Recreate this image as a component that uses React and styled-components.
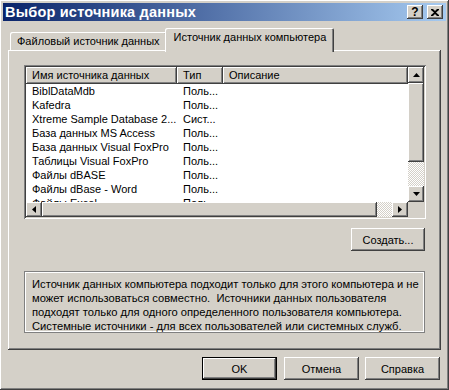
import styled, { createGlobalStyle } from "styled-components";

const FACE = "#D4D0C8";
const RAISED = `box-shadow: inset -1px -1px #404040, inset 1px 1px #ffffff, inset -2px -2px #808080, inset 2px 2px ${FACE};`;
const SUNKEN = `box-shadow: inset 1px 1px #808080, inset -1px -1px #ffffff, inset 2px 2px #404040, inset -2px -2px ${FACE};`;
const HATCH = `background: repeating-conic-gradient(#ffffff 0 25%, ${FACE} 0 50%) 0 0 / 2px 2px;`;

const GlobalStyle = createGlobalStyle`
  html, body {
    margin: 0;
    padding: 0;
    background: ${FACE};
    overflow: hidden;
  }
  * {
    box-sizing: border-box;
  }
`;

const Window = styled.div`
  width: 449px;
  height: 390px;
  padding: 3px;
  display: flex;
  flex-direction: column;
  background: ${FACE};
  font-family: "Liberation Sans", Arial, sans-serif;
  font-size: 11px;
  color: #000;
  ${RAISED}
`;

const TitleBar = styled.div`
  height: 18px;
  display: flex;
  align-items: center;
  padding: 0 3px 0 2px;
  background: linear-gradient(to right, #0a246a, #a6caf0);
`;

const Title = styled.div`
  flex: 1;
  color: #fff;
  font-weight: bold;
  font-size: 14.5px;
  letter-spacing: 0.2px;
`;

const CaptionButton = styled.div`
  width: 16px;
  height: 14px;
  margin-left: ${(p) => p.gap || 0}px;
  display: flex;
  align-items: center;
  justify-content: center;
  background: ${FACE};
  font-weight: bold;
  font-size: 12px;
  ${RAISED}
`;

const Body = styled.div`
  flex: 1;
  display: flex;
  flex-direction: column;
  padding: 7px 5px 0 5px;
`;

const TabStrip = styled.div`
  height: 22px;
  display: flex;
  align-items: flex-end;
  padding-left: 2px;
  position: relative;
  z-index: 1;
`;

const Tab = styled.div`
  height: ${(p) => (p.active ? 24 : 18)}px;
  margin: ${(p) => (p.active ? "0 0 -2px -2px" : "0")};
  padding: ${(p) => (p.active ? "3px 8px 0 9px" : "3px 7px 0 7px")};
  background: ${FACE};
  white-space: nowrap;
  border-radius: 2px 2px 0 0;
  box-shadow: inset 1px 1px #ffffff, inset -1px 0 #404040, inset -2px 0 #808080;
`;

const Panel = styled.div`
  height: 300px;
  width: 433px;
  display: flex;
  flex-direction: column;
  padding: 15px 15px 0 16px;
  ${RAISED}
`;

const ListView = styled.div`
  width: 402px;
  height: 154px;
  padding: 2px;
  display: grid;
  grid-template-columns: 1fr 16px;
  grid-template-rows: 1fr 15px;
  background: #fff;
  ${SUNKEN}
`;

const ListArea = styled.div`
  overflow: hidden;
  display: flex;
  flex-direction: column;
`;

const Header = styled.div`
  display: flex;
  height: 17px;
  flex-shrink: 0;
`;

const HeaderCell = styled.div`
  width: ${(p) => p.w}px;
  flex: ${(p) => (p.w ? "none" : 1)};
  padding: 2px 0 0 6px;
  background: ${FACE};
  white-space: nowrap;
  box-shadow: inset -1px -1px #404040, inset 1px 1px #ffffff, inset -2px -2px #808080;
`;

const Row = styled.div`
  display: flex;
  height: 14px;
  line-height: 14px;
  flex-shrink: 0;
  white-space: nowrap;
`;

const Cell = styled.div`
  width: ${(p) => p.w}px;
  padding-left: 6px;
  overflow: hidden;
`;

const VScroll = styled.div`
  display: flex;
  flex-direction: column;
  ${HATCH}
`;

const HScroll = styled.div`
  display: flex;
  ${HATCH}
`;

const ArrowBtn = styled.div`
  width: ${(p) => p.w || 16}px;
  height: ${(p) => p.h || 16}px;
  flex-shrink: 0;
  display: flex;
  align-items: center;
  justify-content: center;
  background: ${FACE};
  ${RAISED}
`;

const Thumb = styled.div`
  flex: ${(p) => p.size};
  background: ${FACE};
  ${RAISED}
`;

const Track = styled.div`
  flex: ${(p) => p.size};
`;

const Corner = styled.div`
  background: ${FACE};
`;

const ActionRow = styled.div`
  display: flex;
  justify-content: flex-end;
  padding-right: 1px;
  margin-top: 9px;
`;

const Button = styled.button`
  width: ${(p) => p.w || 75}px;
  height: 23px;
  margin-left: ${(p) => p.gap || 0}px;
  padding: 0;
  border: 0;
  background: ${FACE};
  font: inherit;
  color: #000;
  ${(p) =>
    p.primary
      ? `box-shadow: inset 0 0 0 1px #000, inset -2px -2px #404040, inset 2px 2px #ffffff, inset -3px -3px #808080, inset 3px 3px ${FACE};`
      : RAISED}
`;

const InfoBox = styled.div`
  margin-top: 20px;
  width: 401px;
  height: 62px;
  padding: 6px 0 0 8px;
  font-size: 11.2px;
  line-height: 14px;
  white-space: nowrap;
  box-shadow: inset 1px 1px #808080, inset -1px -1px #808080, inset 2px 2px #ffffff, inset -2px -2px #ffffff;
`;

const Footer = styled.div`
  display: flex;
  justify-content: flex-end;
  padding-right: 1px;
  margin-top: 7px;
`;

const Underline = styled.span`
  text-decoration: underline;
`;

const UpArrow = () => (
  <svg width="7" height="4" viewBox="0 0 7 4">
    <polygon points="3.5,0 7,4 0,4" fill="#000" />
  </svg>
);
const DownArrow = () => (
  <svg width="7" height="4" viewBox="0 0 7 4">
    <polygon points="0,0 7,0 3.5,4" fill="#000" />
  </svg>
);
const LeftArrow = () => (
  <svg width="4" height="7" viewBox="0 0 4 7">
    <polygon points="4,0 4,7 0,3.5" fill="#000" />
  </svg>
);
const RightArrow = () => (
  <svg width="4" height="7" viewBox="0 0 4 7">
    <polygon points="0,0 4,3.5 0,7" fill="#000" />
  </svg>
);
const CloseIcon = () => (
  <svg width="8" height="7" viewBox="0 0 8 7">
    <path d="M0 0h2l2 2 2-2h2v1L5 3.5 8 6v1H6L4 5 2 7H0V6l3-2.5L0 1z" fill="#000" />
  </svg>
);

const SOURCES = [
  ["BiblDataMdb", "Поль..."],
  ["Kafedra", "Поль..."],
  ["Xtreme Sample Database 2...", "Сист..."],
  ["База данных MS Access", "Поль..."],
  ["База данных Visual FoxPro", "Поль..."],
  ["Таблицы Visual FoxPro", "Поль..."],
  ["Файлы dBASE", "Поль..."],
  ["Файлы dBase - Word", "Поль..."],
  ["Файлы Excel", "Поль..."],
];

const App = () => {
  return (
    <>
      <GlobalStyle />
      <Window>
        <TitleBar>
          <Title>Выбор источника данных</Title>
          <CaptionButton>?</CaptionButton>
          <CaptionButton gap={4}>
            <CloseIcon />
          </CaptionButton>
        </TitleBar>

        <Body>
          <TabStrip>
            <Tab>Файловый источник данных</Tab>
            <Tab active>Источник данных компьютера</Tab>
          </TabStrip>

          <Panel>
            <ListView>
              <ListArea>
                <Header>
                  <HeaderCell w={151}>Имя источника данных</HeaderCell>
                  <HeaderCell w={46}>Тип</HeaderCell>
                  <HeaderCell>Описание</HeaderCell>
                </Header>
                {SOURCES.map(([name, type]) => (
                  <Row key={name}>
                    <Cell w={151}>{name}</Cell>
                    <Cell w={46}>{type}</Cell>
                  </Row>
                ))}
              </ListArea>

              <VScroll>
                <ArrowBtn>
                  <UpArrow />
                </ArrowBtn>
                <Thumb size={81} />
                <Track size={25} />
                <ArrowBtn>
                  <DownArrow />
                </ArrowBtn>
              </VScroll>

              <HScroll>
                <ArrowBtn h={15}>
                  <LeftArrow />
                </ArrowBtn>
                <Thumb size={336} />
                <Track size={15} />
                <ArrowBtn h={15}>
                  <RightArrow />
                </ArrowBtn>
              </HScroll>
              <Corner />
            </ListView>

            <ActionRow>
              <Button w={74}>
                Соз<Underline>д</Underline>ать...
              </Button>
            </ActionRow>

            <InfoBox>
              Источник данных компьютера подходит только для этого компьютера и не
              <br />
              может использоваться совместно.&nbsp; Источники данных пользователя
              <br />
              подходят только для одного определенного пользователя компьютера.
              <br />
              Системные источники - для всех пользователей или системных служб.
            </InfoBox>
          </Panel>

          <Footer>
            <Button primary>OK</Button>
            <Button gap={7}>Отмена</Button>
            <Button gap={6}>Справка</Button>
          </Footer>
        </Body>
      </Window>
    </>
  );
};

export default App;
